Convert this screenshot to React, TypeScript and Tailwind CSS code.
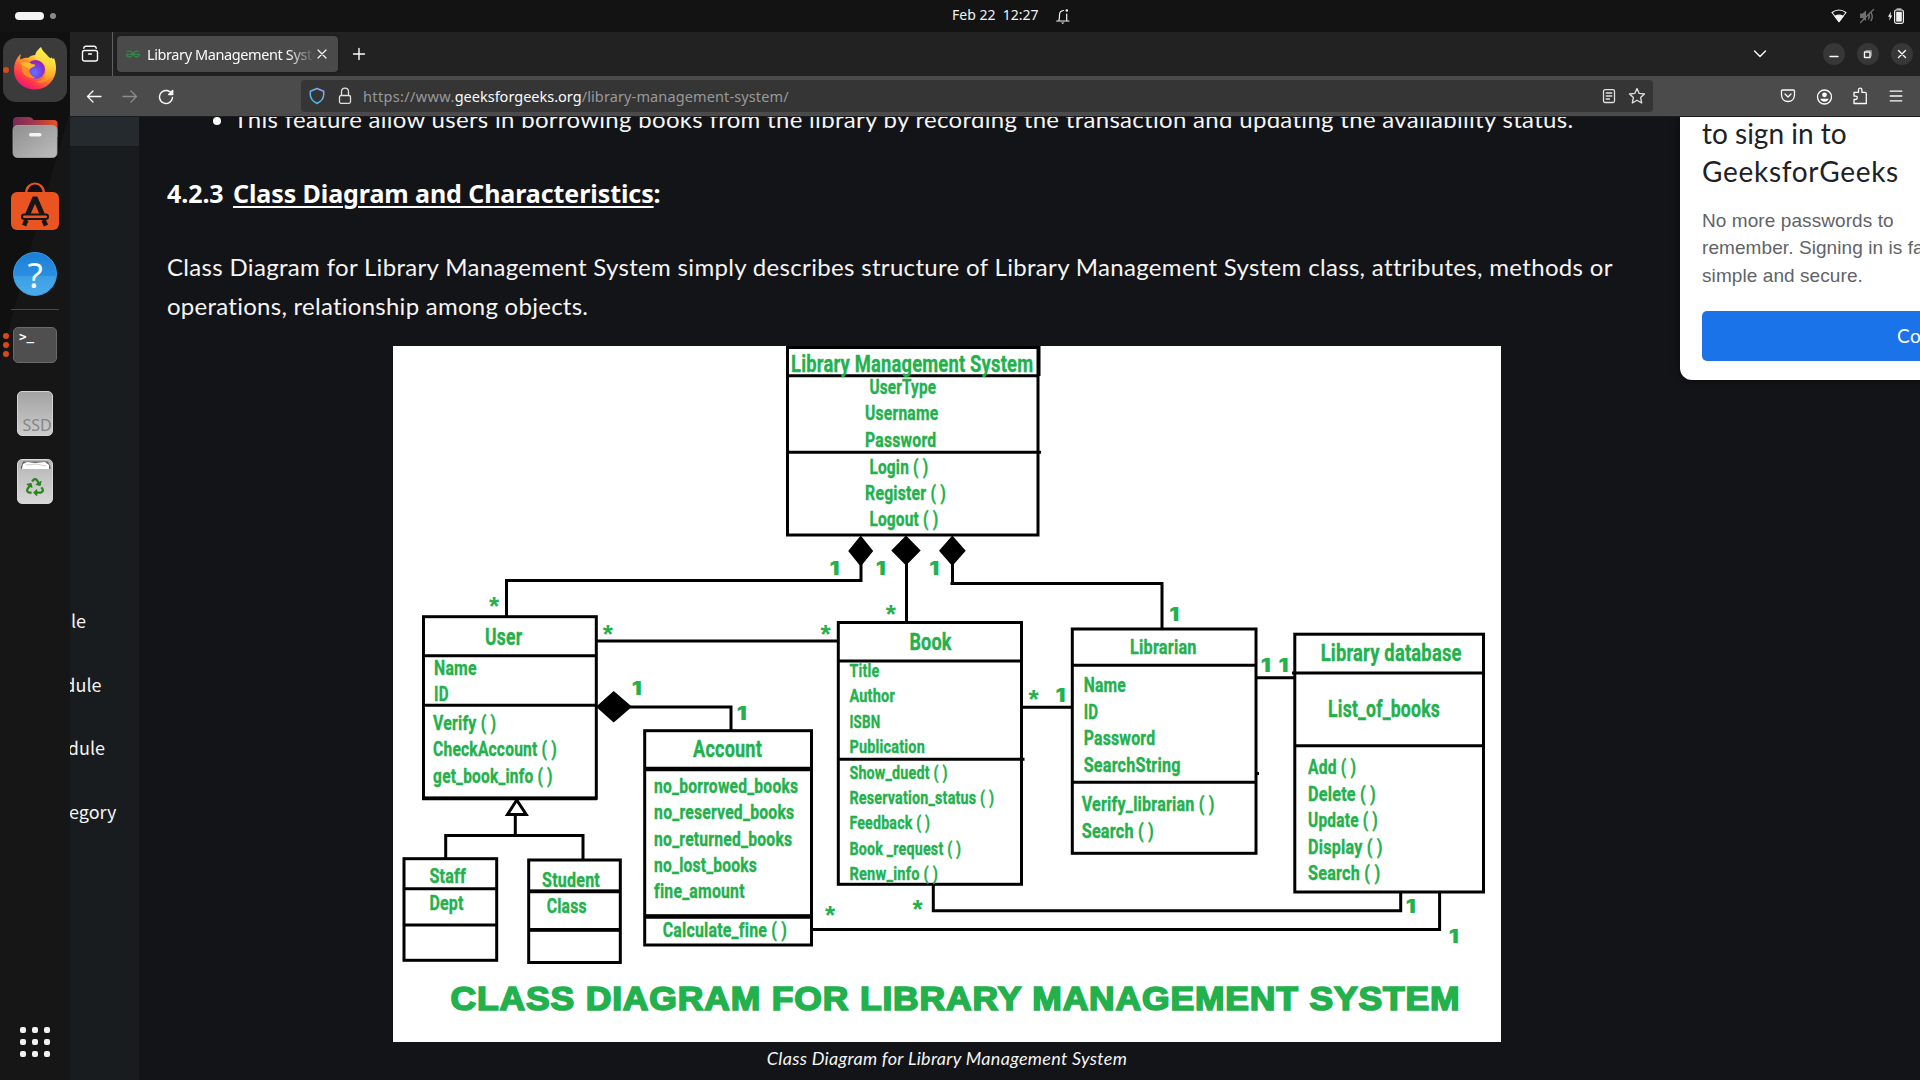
import React from "react";
import { SiGeeksforgeeks } from "react-icons/si";
import { FaRecycle } from "react-icons/fa";

type Label = [string, number, number, number, number?];

/* text, left, right, baseline, size */
const labels: Label[] = [
  ["Library Management System", 791.7, 1032.3, 372, 24],
  ["UserType", 870, 935.3, 394],
  ["Username", 865.7, 937.3, 420.3],
  ["Password", 865.7, 935.3, 446.7],
  ["Login ( )", 870, 927.3, 473.5],
  ["Register ( )", 865.7, 945, 500],
  ["Logout ( )", 870, 937.3, 526.3],
  ["User", 485.7, 521.3, 644.5, 23.5],
  ["Name", 434.7, 475.7, 674.7],
  ["ID", 434.7, 447.7, 700.7],
  ["Verify ( )", 433.7, 495.3, 729.7],
  ["CheckAccount ( )", 433.7, 556, 756.3],
  ["get_book_info ( )", 433.7, 551.7, 782.7],
  ["Account", 693.7, 761, 757.3, 23.5],
  ["no_borrowed_books", 654.7, 797.2, 792.7],
  ["no_reserved_books", 654.7, 793.3, 819.3],
  ["no_returned_books", 654.7, 791.3, 845.7],
  ["no_lost_books", 654.7, 756, 872],
  ["fine_amount", 654.7, 743.7, 898.3],
  ["Calculate_fine ( )", 663.3, 786, 937.3],
  ["Staff", 430, 465, 883.3],
  ["Dept", 430, 462.7, 910],
  ["Student", 542.7, 599, 887],
  ["Class", 547.3, 585.7, 913.3],
  ["Book", 910, 950.7, 649.5, 23.5],
  ["Title", 850, 878.3, 677, 19],
  ["Author", 850, 894, 702.3, 19],
  ["ISBN", 850, 879.3, 727.5, 19],
  ["Publication", 850, 924, 753.3, 19],
  ["Show_duedt ( )", 850, 946.7, 778.5, 19],
  ["Reservation_status ( )", 850, 993.3, 803.5, 19],
  ["Feedback ( )", 850, 929.3, 829, 19],
  ["Book _request ( )", 850, 960.3, 854.5, 19],
  ["Renw_info ( )", 850, 937, 880.3, 19],
  ["Librarian", 1130.7, 1195.7, 653.7],
  ["Name", 1084.3, 1125, 692],
  ["ID", 1084.3, 1097.3, 718.7],
  ["Password", 1084.3, 1154.3, 745],
  ["SearchString", 1084.3, 1179.7, 771.5],
  ["Verify_librarian ( )", 1082.3, 1213.7, 811.3],
  ["Search ( )", 1082.3, 1153, 838],
  ["Library database", 1321.3, 1460.7, 661, 23.5],
  ["List_of_books", 1328.7, 1439, 717.3, 23.5],
  ["Add ( )", 1308.7, 1355.3, 774.3],
  ["Delete ( )", 1308.7, 1375, 800.7],
  ["Update ( )", 1308.7, 1377, 827],
  ["Display ( )", 1308.7, 1381.7, 853.5],
  ["Search ( )", 1308.7, 1379.3, 880],
];

const ones: [number, number][] = [
  [830, 575], [876.3, 575], [929.7, 575], [632.3, 695], [737.3, 720],
  [1169.7, 620.7], [1056, 701.7], [1261.3, 672.3], [1279, 672.3],
  [1406.3, 913], [1449.3, 943],
];

const stars: [number, number][] = [
  [494.3, 602], [608, 629.7], [825.7, 629.7], [830.3, 911],
  [891, 610], [1033.7, 695], [917.7, 904.7],
];

/* left, top, right, bottom, divider rows */
const boxes: [number, number, number, number, number[]][] = [
  [787.5, 347.5, 1038, 535, [375.7, 452.3]],
  [423.5, 616.7, 596.3, 798.3, [655.7, 705.3]],
  [644.7, 730.7, 811.5, 945, [768.7, 916.3]],
  [404, 858.7, 496.7, 960.3, [888.7, 925]],
  [528.7, 860, 620.3, 962.5, [891.3, 929.8]],
  [838.3, 622.5, 1021.5, 884.3, [661, 759.3]],
  [1072.3, 629, 1256, 853.3, [665.3, 782.3]],
  [1294.8, 634.2, 1483.5, 892, [673, 745.7]],
];

function Diagram() {
  return (
    <svg viewBox="393 346 1108 696" className="block h-[696px] w-[1108px] bg-white">
      <g fill="none" stroke="#000" strokeWidth={3}>
        {boxes.map(([l, t, r, b, rows], i) => (
          <g key={i}>
            <rect x={l} y={t} width={r - l} height={b - t} />
            {rows.map((y) => <path key={y} d={`M${l} ${y}H${r}`} />)}
          </g>
        ))}
        <path d="M861 560V580.5H506.5V616" />
        <path d="M906.5 560V622" />
        <path d="M952.5 560V583.5H1162V629M950.5 583.5H953" />
        <path d="M597 641H838M630 707H731V730M1022 707.3H1072M1257 677.7H1294" />
        <path d="M515.3 815V835.5M445.7 858V835.5H583V859M444.2 835.5H584.5" />
        <path d="M933.3 885V910.8H1400.7V892M812 929.4H1439.6V892" />
        <path d="M1039 346V376M1037 452.3H1041M1021 759.3H1024.5M1257 773.5H1259M1292 673H1296" />
        <path d="M645 769H811M645 916.5H811" strokeWidth={4.6} />
        <path d="M422 798.4H597M529 891.3H620M529 929.8H620" strokeWidth={3.8} />
        <path d="M516.7 800L507.5 814.5H526.2Z" fill="#fff" />
      </g>
      <path d="M860.7 535.5L873.2 551L860.7 566.5L848.2 551ZM906 535.5L920.7 550.5L906 565.5L891.3 550.5ZM952.3 535.5L965.7 550.7L952.3 566L939 550.7ZM613.7 691L632 706.7L613.7 722.5L596 706.7Z" />
      <g fill="#22b14c">
        <g fontFamily="Roboto, sans-serif" fontWeight={700} stroke="#22b14c" strokeWidth={0.35}>
          {labels.map(([t, l, r, y, s = 20], i) => (
            <text key={i} x={l - 0.6} y={y} fontSize={s} textLength={r - l + 1.6} lengthAdjust="spacingAndGlyphs">{t}</text>
          ))}
        </g>
        <g fontFamily="Inter, sans-serif" fontWeight={900} fontSize={18.5}>
          {ones.map(([x, y], i) => (
            <text key={i} x={x - 0.5} y={y} textLength={10.3} lengthAdjust="spacingAndGlyphs">1</text>
          ))}
        </g>
        <g fontFamily="Liberation Sans, sans-serif" fontWeight={700} fontSize={26} textAnchor="middle">
          {stars.map(([x, y], i) => <text key={i} x={x} y={y + 13}>*</text>)}
        </g>
        <text x={450.5} y={1010} fontFamily="Liberation Sans, sans-serif" fontWeight={700} fontSize={33} stroke="#22b14c" strokeWidth={1.7} letterSpacing={0.8} textLength={1010} lengthAdjust="spacingAndGlyphs">
          CLASS DIAGRAM FOR LIBRARY MANAGEMENT SYSTEM
        </text>
      </g>
    </svg>
  );
}

function DockItem({ children, dots = 0, active = false }: { children: React.ReactNode; dots?: number; active?: boolean }) {
  return (
    <div className={`relative ml-[3px] flex size-16 items-center justify-center rounded-[13px] ${active ? "bg-[#3b3b3b]" : ""}`}>
      {dots > 0 && (
        <div className="absolute inset-y-0 left-0 flex flex-col justify-center gap-[3px]">
          {Array.from({ length: dots }, (_, i) => <span key={i} className="size-1.5 rounded-full bg-[#d9481a]" />)}
        </div>
      )}
      {children}
    </div>
  );
}

function Firefox() {
  return (
    <svg viewBox="0 0 44 46" className="mb-1 h-[46px] w-11">
      <defs>
        <linearGradient id="ff1" x1="0.85" y1="0.1" x2="0.2" y2="0.95">
          <stop offset="0" stopColor="#fff44f" /><stop offset="0.3" stopColor="#ffb02e" />
          <stop offset="0.55" stopColor="#ff6a36" /><stop offset="0.8" stopColor="#ff2f4c" /><stop offset="1" stopColor="#e31587" />
        </linearGradient>
        <radialGradient id="ff2" cx="0.45" cy="0.65" r="0.6">
          <stop offset="0" stopColor="#6173ff" /><stop offset="0.6" stopColor="#7542e5" /><stop offset="1" stopColor="#9a22b8" />
        </radialGradient>
        <linearGradient id="ff3" x1="0.6" y1="0" x2="0.5" y2="1">
          <stop offset="0" stopColor="#fff44f" /><stop offset="0.5" stopColor="#ffd53a" /><stop offset="1" stopColor="#ff8a1e" />
        </linearGradient>
      </defs>
      <path d="M8 9C7 12 7 13 7.500 15C9 13.500 12 12 15 13C18 10 23 9 27 11L34 11C37 13 40 15 41 13C43 18 43.500 23 42.500 28C40 38 32 44.500 22 44.500C10 44.500 1 36 1 25C1 19 3 13 8 9Z" fill="url(#ff1)" />
      <path d="M28 2C23 6 20 11 24 15C30 17 34 22 33 28C32 34 27 37 22 37C32 40 40 33 41 25C42 20 41 15 38 12C38 14 38 15 38 16C36 10 30 8 28 2Z" fill="url(#ff3)" />
      <circle cx="22.500" cy="24.500" r="9.500" fill="url(#ff2)" />
      <path d="M6 15C11 12.500 15 15 17 18C19 20 22 19 22 20C22 22 18 22 17 24C15 27 18 31 23 33C15 34 10 30 9 25C9 21 9 18 6 15Z" fill="#ff8a2a" />
      <path d="M17 18C19 20 22 19 22 20C22 22 18 22 17 24C14 23 10 21 7 18C11 17 15 17 17 18Z" fill="#ffb829" />
    </svg>
  );
}

function Files() {
  return (
    <svg viewBox="0 0 46 42" className="h-[42px] w-[46px]">
      <defs>
        <linearGradient id="fl1" x1="0" x2="1"><stop offset="0" stopColor="#77295a" /><stop offset="0.5" stopColor="#a53a4c" /><stop offset="1" stopColor="#e95420" /></linearGradient>
        <linearGradient id="fl2" x1="0" y1="0" x2="1" y2="1"><stop offset="0" stopColor="#8f8f8f" /><stop offset="1" stopColor="#bdbdbd" /></linearGradient>
      </defs>
      <path d="M1 4a4 4 0 0 1 4-4H17Q20 0 21.500 3H42a3.500 3.500 0 0 1 3.500 3.500V20H1Z" fill="url(#fl1)" />
      <rect x="1" y="8.500" width="44" height="32" rx="4.500" fill="url(#fl2)" stroke="#a9a9a9" strokeWidth="0.8" />
      <rect x="17" y="16" width="12.500" height="3.600" rx="1.800" fill="#f4f4f4" />
    </svg>
  );
}

function AppCenter() {
  return (
    <svg viewBox="0 0 48 48" className="size-12">
      <path d="M15 12C15 -2 33 -2 33 12" fill="none" stroke="#e95420" strokeWidth="2.200" />
      <rect y="10" width="48" height="38" rx="6" fill="#e95420" />
      <g fill="none" stroke="#161616">
        <path d="M16 34L24 15.500L32 34" strokeWidth="5" strokeLinejoin="bevel" />
        <rect x="11" y="32.500" width="26" height="4.500" rx="2.200" fill="#e95420" strokeWidth="2" />
        <path d="M15.500 38L13 43.500M32.500 38L35 43.500" strokeWidth="4.500" />
      </g>
    </svg>
  );
}

function Dock() {
  return (
    <aside className="relative flex h-full w-[70px] shrink-0 flex-col bg-[#161616] pt-1.5">
      <div className="absolute inset-x-0 top-0 h-[330px] bg-[#101010] [clip-path:polygon(0_0,100%_0,100%_24%,43%_66%,0_100%)]" />
      <div className="relative flex h-full flex-col">
        <div className="flex flex-col gap-1">
          <DockItem active dots={1}><Firefox /></DockItem>
          <DockItem><Files /></DockItem>
          <DockItem><AppCenter /></DockItem>
          <DockItem>
            <div className="flex size-11 items-center justify-center rounded-full border border-[#3c9be4] bg-[linear-gradient(#1c7fd8_0%,#2a8fe0_54%,#3c9fe5_55%,#4aacea_100%)] font-['Noto_Sans'] text-[35px] leading-none text-white">?</div>
          </DockItem>
        </div>
        <div className="mx-[11px] my-[3px] h-px bg-[#4a4a4a]" />
        <div className="flex flex-col gap-1">
          <DockItem dots={3}>
            <div className="flex h-9 w-11 items-start rounded-[5px] border border-[#6a6a6a] bg-[#4f4f4f] pt-[3px] pl-[5px] font-['DejaVu_Sans_Mono'] text-[12.500px] leading-none font-bold text-white">&gt;<span className="-mt-px">_</span></div>
          </DockItem>
          <DockItem>
            <div className="flex h-[45px] w-9 items-end justify-center rounded-[5px] border border-[#d5d5d5] bg-[linear-gradient(#a3a3a3,#cccccc)] pl-1 font-['Noto_Sans'] text-[16px] leading-[20px] text-[#858585]">SSD</div>
          </DockItem>
          <DockItem>
            <div className="relative flex h-[45px] w-9 items-center justify-center rounded-[5px] border border-[#d8d8d8] bg-[linear-gradient(#b5b5b5,#d8d8d8)] pt-3">
              <svg viewBox="0 0 30 8" className="absolute top-[1px] left-[3px] h-2 w-[30px]">
                <path d="M0 6L2 0.500H27L29.500 6V8H0Z" fill="#666" /><path d="M2 3L6 1L14 2L24 1L28 4V8H1Z" fill="#fff" /><path d="M5 4L15 3L25 5" stroke="#aaa" strokeWidth="0.600" fill="none" />
              </svg>
              <FaRecycle className="size-[18px] text-[#27871c]" />
            </div>
          </DockItem>
        </div>
        <div className="mt-auto mb-[23px] ml-5 grid w-[30px] grid-cols-3 gap-1.5">
          {Array.from({ length: 9 }, (_, i) => <span key={i} className="size-1.5 rounded-[2px] bg-[#f2f2f2]" />)}
        </div>
      </div>
    </aside>
  );
}

function Icon({ children, w = 16, h = 16, color = "#fbfbfe", sw = 1.3 }: { children: React.ReactNode; w?: number; h?: number; color?: string; sw?: number }) {
  return (
    <svg width={w} height={h} viewBox={`0 0 ${w} ${h}`} fill="none" stroke={color} strokeWidth={sw} strokeLinecap="round" strokeLinejoin="round" className="shrink-0">
      {children}
    </svg>
  );
}

function Slot({ children, small = false }: { children: React.ReactNode; small?: boolean }) {
  return <div className={`flex h-8 shrink-0 items-center justify-center ${small ? "w-7" : "w-9"}`}>{children}</div>;
}

function TopBar() {
  return (
    <header className="relative flex h-8 shrink-0 items-center bg-[#131313] px-[15px]">
      <span className="h-2 w-[29px] rounded-full bg-[#f4f4f4]" />
      <span className="ml-1.5 size-1.5 rounded-full bg-[#8a8a8a]" />
      <div className="absolute top-0 left-[952px] flex h-8 items-center font-['Noto_Sans'] text-[14px] text-[#f2f2f2]">
        <span className="w-[85px] pb-[3px] whitespace-pre">Feb 22  12:27</span>
        <span className="ml-[19px]">
          <Icon w={14} h={16} color="#f2f2f2" sw={1.2}>
            <path d="M0.700 13H13M3 12Q3.500 10 3.500 7Q3.500 3 7.500 2.500M10.700 6V12" />
            <circle cx="10.800" cy="2.500" r="1.300" fill="#f2f2f2" stroke="none" /><path d="M5 14.500H8.500L6.700 16Z" fill="#f2f2f2" stroke="none" />
          </Icon>
        </span>
      </div>
      <div className="ml-auto flex items-center gap-3 pr-px">
        <Icon w={16} h={14} color="#f2f2f2" sw={1.1}>
          <path d="M1 3.500Q8 -1.500 15 3.500L8 12.500Z" /><path d="M4 7.300Q8 5 12 7.300L8 12.700Z" fill="#f2f2f2" />
        </Icon>
        <Icon w={16} h={16} color="#6f6f6f" sw={1.4}>
          <path d="M1 5.500H3.500L7 2.500V13L3.500 10H1Z" fill="#6f6f6f" stroke="none" /><path d="M1.500 14.500L14.500 1.500M10 6Q11 8.500 9.500 11M12 4.500Q14.500 9 12 12.500" />
        </Icon>
        <Icon w={17} h={16} color="#f2f2f2" sw={1.2}>
          <rect x="7.600" y="2" width="8.800" height="13.300" rx="1.800" /><rect x="9.200" y="3.800" width="5.600" height="9.800" fill="#f2f2f2" stroke="none" />
          <path d="M10 1H14" /><path d="M4 3.500L1 8.800H2.800L2.200 12.800L5.200 7.500H3.500Z" fill="#f2f2f2" stroke="none" />
        </Icon>
      </div>
    </header>
  );
}

function TabStrip() {
  return (
    <div className="flex h-11 shrink-0 items-center bg-[#222222] pr-[7px]">
      <div className="flex h-full w-[42px] items-center justify-center pr-0.5">
        <Icon w={18} h={18} sw={1.4}><rect x="1.500" y="5.500" width="15" height="10.500" rx="2" /><path d="M2.800 3.200Q3 1.200 5 1.200H13Q15 1.200 15.200 3.200M7.500 9H10.500" /></Icon>
      </div>
      <div className="h-full w-px bg-[#606060]" />
      <div className="ml-1 flex h-9 w-[221px] items-center rounded bg-[#4a4a4a] pl-[9px] shadow-[0_0_3px_rgba(0,0,0,0.4)]">
        <SiGeeksforgeeks className="size-[14px] text-[#2f8d46]" />
        <div className="ml-[7px] w-[168px] overflow-hidden pt-px font-['Noto_Sans'] text-[14.500px] tracking-[-0.400px] whitespace-nowrap text-[#fbfbfe] [mask-image:linear-gradient(90deg,#000_84%,transparent)]">Library Management System</div>
        <Icon w={14} h={14} sw={1.2}><path d="M3 3L11 11M11 3L3 11" /></Icon>
      </div>
      <div className="ml-[3px]"><Slot><Icon w={14} h={14} sw={1.4}><path d="M7 1.500V12.500M1.500 7H12.500" /></Icon></Slot></div>
      <div className="mr-[45px] ml-auto"><Slot><Icon w={14} h={8} sw={1.4}><path d="M1.500 1L7 6.500L12.500 1" /></Icon></Slot></div>
      <div className="flex gap-3">
        {["M7 13.500H15", "", "M7.500 7.500L14.500 14.500M14.500 7.500L7.500 14.500"].map((d, i) => (
          <div key={i} className="size-[22px] rounded-full bg-[#373737]">
            <Icon w={22} h={22} sw={1.4}>{d ? <path d={d} /> : <><rect x="7.500" y="9" width="5.500" height="5.500" /><path d="M9 7.500H14.500V13" stroke="#8a8a8a" strokeWidth="1" /></>}</Icon>
          </div>
        ))}
      </div>
    </div>
  );
}

function NavBar() {
  return (
    <div className="flex h-[41px] shrink-0 items-center border-b border-[#1c1c1f] bg-[#4b4b4b] px-1.5">
      <Slot><Icon h={18}><path d="M1.500 9.500H15M7 4L1.500 9.500L7 15" /></Icon></Slot>
      <Slot><Icon h={18} color="#8c8c8e"><path d="M1 9.500H14.500M9 4L14.500 9.500L9 15" /></Icon></Slot>
      <Slot><Icon h={17} sw={1.4}><path d="M13.800 6A6.500 6.500 0 1 0 14.500 9.500M14.700 2.500V6.500H10.700Z" /></Icon></Slot>
      <div className="ml-[117px] flex h-8 w-[1352px] items-center rounded bg-[#353535] px-0.5">
        <Slot small>
          <svg width="16" height="18" viewBox="0 0 16 18" fill="none" strokeWidth="1.500">
            <defs><linearGradient id="sh" x1="0" y1="1" x2="1" y2="0"><stop offset="0" stopColor="#2fc8f2" /><stop offset="1" stopColor="#a49bf0" /></linearGradient></defs>
            <path d="M8 1.500L14.700 4.300V8Q14.200 13.500 8 16.500Q1.800 13.500 1.300 8V4.300Z" stroke="url(#sh)" strokeLinejoin="round" />
          </svg>
        </Slot>
        <Slot small><Icon w={14} h={18} color="#e0e0e2"><rect x="1.500" y="8.500" width="11" height="7.800" rx="1.500" /><path d="M3.500 8V4.500Q3.700 1.200 7 1.200Q10.300 1.200 10.500 4.500V8" /></Icon></Slot>
        <div className="ml-1 pt-0.5 font-['Noto_Sans'] text-[14.500px] tracking-[0.120px] text-[#99999b]">
          <span className="tracking-[0.350px]">https://www.</span><span className="tracking-normal text-[#fbfbfe]">geeksforgeeks.org</span>/library-management-system/
        </div>
        <div className="ml-auto flex">
          <Slot small><Icon color="#e0e0e2"><rect x="2.500" y="1.700" width="11" height="12.800" rx="1.500" /><path d="M5.200 5H10.800M5.200 8H10.800M5.200 11H8.500" /></Icon></Slot>
          <Slot small><Icon w={18} h={18} color="#e0e0e2"><path d="M9 1.500L11.200 6.400L16.500 7L12.600 10.600L13.700 16L9 13.300L4.300 16L5.400 10.600L1.500 7L6.800 6.400Z" /></Icon></Slot>
        </div>
      </div>
      <div className="ml-auto flex">
        <Slot><Icon><path d="M2.700 2H13.300Q14.500 2 14.500 3.200V7Q14 13.500 8 13.500Q2 13.500 1.500 7V3.200Q1.500 2 2.700 2ZM5 6L8 9L11 6" /></Icon></Slot>
        <Slot><Icon h={17}><circle cx="8.500" cy="9" r="7" /><circle cx="8.500" cy="6.800" r="2.400" fill="#fbfbfe" stroke="none" /><path d="M4.300 10.800H12.700Q11.500 13.700 8.500 13.700Q5.500 13.700 4.300 10.800Z" fill="#fbfbfe" stroke="none" /></Icon></Slot>
        <Slot><Icon w={16} h={18}><path d="M2 16.500V12.500H3.500Q5.300 12.500 5.300 10.800T3.500 9.200H2V5.300H6.500V3Q6.500 1.200 8.200 1.200T9.900 3V5.300H13Q14.300 5.300 14.300 6.600V16.500Z" /></Icon></Slot>
        <Slot><Icon w={14} h={14}><path d="M1.200 2.200H12.800M1.200 7H12.800M1.200 11.800H12.800" /></Icon></Slot>
      </div>
    </div>
  );
}

function Page() {
  return (
    <div className="relative flex min-h-0 flex-1 overflow-hidden bg-[#131417]">
      <nav className="flex w-[69px] shrink-0 flex-col overflow-hidden bg-[#181c1f] font-['Noto_Sans_CJK_SC'] text-[18px] leading-6 text-[#f4f4f4]">
        <div className="mb-[462px] h-[29px] shrink-0 bg-[#252a2e]" />
        <div className="mb-[39.500px] flex w-4 justify-end">le</div>
        <div className="mb-[39.500px] flex w-[31.500px] justify-end">dule</div>
        <div className="mb-[39.500px] flex w-[35px] justify-end">dule</div>
        <div className="flex w-[46.500px] justify-end">tegory</div>
      </nav>
      <main className="-mt-[18px] ml-7 flex w-[1560px] flex-col font-[Lato] text-[24px] leading-[39px] tracking-[0.260px] text-[#f5f5f5]">
        <div className="flex items-center tracking-[0.300px] whitespace-nowrap">
          <span className="mt-1 ml-[46px] size-2 rounded-full bg-white" />
          <span className="ml-[12.500px]">This feature allow users in borrowing books from the library by recording the transaction and updating the availability status.</span>
        </div>
        <h2 className="mt-[36px] font-['Noto_Sans'] text-[25px] font-bold tracking-[-0.080px] text-white">4.2.3 <span className="ml-[3px] underline decoration-2 underline-offset-[3px]">Class Diagram and Characteristics</span>:</h2>
        <p className="mt-[34px] whitespace-nowrap">
          <span className="tracking-[0.325px]">Class Diagram for Library Management System simply describes structure of Library Management System class, attributes, methods or</span><br />operations, relationship among objects.
        </p>
        <figure className="mt-[21px] ml-[226px] w-[1108px]">
          <Diagram />
          <figcaption className="mt-0.5 text-center text-[18px] leading-7 tracking-[0.290px] italic">Class Diagram for Library Management System</figcaption>
        </figure>
      </main>
      <div className="absolute top-0 left-[1610px] h-[263px] w-[400px] rounded-b-xl bg-white pl-[22px] shadow-[0_0_8px_rgba(0,0,0,0.5)]">
        <div className="-mt-[3px] font-[Lato] text-[28px] leading-[38px] tracking-[0.700px] whitespace-nowrap text-[#202124]"><span className="tracking-normal">to sign in to</span><br />GeeksforGeeks</div>
        <div className="mt-[16.500px] font-['Liberation_Sans'] text-[19px] leading-[27.500px] tracking-[0.080px] whitespace-nowrap text-[#5f6368]">No more passwords to<br />remember. Signing in is fast,<br />simple and secure.</div>
        <div className="mt-[21.500px] flex h-[50px] w-[390px] items-center rounded-[5px] bg-[#1a73e8] pt-px pl-[195px] font-[Lato] text-[19px] tracking-[0.500px] text-white">Continue</div>
      </div>
    </div>
  );
}

export default function App() {
  return (
    <div className="relative flex h-[1080px] w-[1920px] flex-col overflow-hidden bg-[#131313]">
      <TopBar />
      <div className="flex min-h-0 flex-1">
        <Dock />
        <div className="flex min-w-0 flex-1 flex-col">
          <TabStrip />
          <NavBar />
          <Page />
        </div>
      </div>
    </div>
  );
}
